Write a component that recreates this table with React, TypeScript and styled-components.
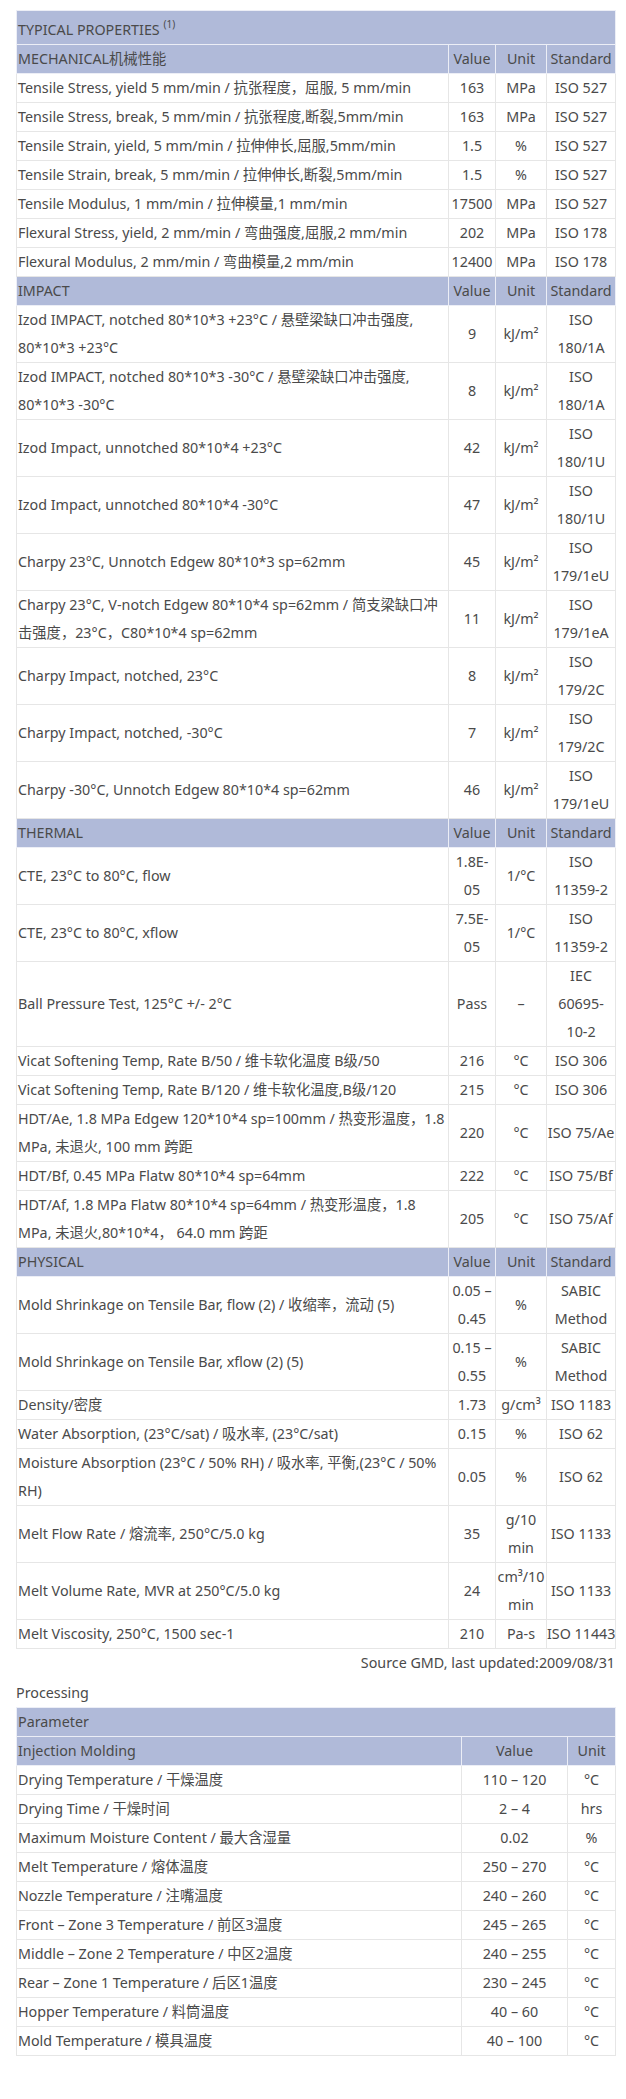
import styled, { createGlobalStyle } from "styled-components";

const GlobalStyle = createGlobalStyle`
  body {
    margin: 0;
    background: #ffffff;
    color: #4a4a4a;
    font-family: "Noto Sans", "Noto Sans CJK SC", sans-serif;
    font-size: 14.3px;
  }
`;

type Row = [string, string, string, string?];

interface Section {
  title: string;
  rows: Row[];
}

// \u00a0 keeps the short standards on one line, as on the data sheet
const sections: Section[] = [
  {
    title: "MECHANICAL机械性能",
    rows: [
      ["Tensile Stress, yield 5 mm/min / 抗张程度，屈服, 5 mm/min", "163", "MPa", "ISO 527"],
      ["Tensile Stress, break, 5 mm/min / 抗张程度,断裂,5mm/min", "163", "MPa", "ISO 527"],
      ["Tensile Strain, yield, 5 mm/min / 拉伸伸长,屈服,5mm/min", "1.5", "%", "ISO 527"],
      ["Tensile Strain, break, 5 mm/min / 拉伸伸长,断裂,5mm/min", "1.5", "%", "ISO 527"],
      ["Tensile Modulus, 1 mm/min / 拉伸模量,1 mm/min", "17500", "MPa", "ISO 527"],
      ["Flexural Stress, yield, 2 mm/min / 弯曲强度,屈服,2 mm/min", "202", "MPa", "ISO 178"],
      ["Flexural Modulus, 2 mm/min / 弯曲模量,2 mm/min", "12400", "MPa", "ISO 178"],
    ],
  },
  {
    title: "IMPACT",
    rows: [
      ["Izod IMPACT, notched 80*10*3 +23°C / 悬壁梁缺口冲击强度, 80*10*3 +23°C", "9", "kJ/m²", "ISO 180/1A"],
      ["Izod IMPACT, notched 80*10*3 -30°C / 悬壁梁缺口冲击强度, 80*10*3 -30°C", "8", "kJ/m²", "ISO 180/1A"],
      ["Izod Impact, unnotched 80*10*4 +23°C", "42", "kJ/m²", "ISO 180/1U"],
      ["Izod Impact, unnotched 80*10*4 -30°C", "47", "kJ/m²", "ISO 180/1U"],
      ["Charpy 23°C, Unnotch Edgew 80*10*3 sp=62mm", "45", "kJ/m²", "ISO 179/1eU"],
      ["Charpy 23°C, V-notch Edgew 80*10*4 sp=62mm / 简支梁缺口冲击强度，23°C，C80*10*4 sp=62mm", "11", "kJ/m²", "ISO 179/1eA"],
      ["Charpy Impact, notched, 23°C", "8", "kJ/m²", "ISO 179/2C"],
      ["Charpy Impact, notched, -30°C", "7", "kJ/m²", "ISO 179/2C"],
      ["Charpy -30°C, Unnotch Edgew 80*10*4 sp=62mm", "46", "kJ/m²", "ISO 179/1eU"],
    ],
  },
  {
    title: "THERMAL",
    rows: [
      ["CTE, 23°C to 80°C, flow", "1.8E-05", "1/°C", "ISO 11359-2"],
      ["CTE, 23°C to 80°C, xflow", "7.5E-05", "1/°C", "ISO 11359-2"],
      ["Ball Pressure Test, 125°C +/- 2°C", "Pass", "–", "IEC 60695-10\u20112"],
      ["Vicat Softening Temp, Rate B/50 / 维卡软化温度 B级/50", "216", "°C", "ISO\u00a0306"],
      ["Vicat Softening Temp, Rate B/120 / 维卡软化温度,B级/120", "215", "°C", "ISO\u00a0306"],
      ["HDT/Ae, 1.8 MPa Edgew 120*10*4 sp=100mm / 热变形温度，1.8 MPa, 未退火, 100 mm 跨距", "220", "°C", "ISO\u00a075/Ae"],
      ["HDT/Bf, 0.45 MPa Flatw 80*10*4 sp=64mm", "222", "°C", "ISO\u00a075/Bf"],
      ["HDT/Af, 1.8 MPa Flatw 80*10*4 sp=64mm / 热变形温度，1.8 MPa, 未退火,80*10*4，  64.0 mm 跨距", "205", "°C", "ISO\u00a075/Af"],
    ],
  },
  {
    title: "PHYSICAL",
    rows: [
      ["Mold Shrinkage on Tensile Bar, flow (2) / 收缩率，流动 (5)", "0.05 – 0.45", "%", "SABIC Method"],
      ["Mold Shrinkage on Tensile Bar, xflow (2) (5)", "0.15 – 0.55", "%", "SABIC Method"],
      ["Density/密度", "1.73", "g/cm³", "ISO\u00a01183"],
      ["Water Absorption, (23°C/sat) / 吸水率, (23°C/sat)", "0.15", "%", "ISO 62"],
      ["Moisture Absorption (23°C / 50% RH) / 吸水率, 平衡,(23°C / 50% RH)", "0.05", "%", "ISO 62"],
      ["Melt Flow Rate / 熔流率, 250°C/5.0 kg", "35", "g/10 min", "ISO\u00a01133"],
      ["Melt Volume Rate, MVR at 250°C/5.0 kg", "24", "cm³/10 min", "ISO\u00a01133"],
      ["Melt Viscosity, 250°C, 1500 sec-1", "210", "Pa-s", "ISO\u00a011443"],
    ],
  },
];

const processing: Row[] = [
  ["Drying Temperature / 干燥温度", "110 – 120", "°C"],
  ["Drying Time / 干燥时间", "2 – 4", "hrs"],
  ["Maximum Moisture Content / 最大含湿量", "0.02", "%"],
  ["Melt Temperature / 熔体温度", "250 – 270", "°C"],
  ["Nozzle Temperature / 注嘴温度", "240 – 260", "°C"],
  ["Front – Zone 3 Temperature / 前区3温度", "245 – 265", "°C"],
  ["Middle – Zone 2 Temperature / 中区2温度", "240 – 255", "°C"],
  ["Rear – Zone 1 Temperature / 后区1温度", "230 – 245", "°C"],
  ["Hopper Temperature / 料筒温度", "40 – 60", "°C"],
  ["Mold Temperature / 模具温度", "40 – 100", "°C"],
];

const Page = styled.div`
  width: 599px;
  padding: 10px 0 0 16px;
`;

const DataTable = styled.table`
  width: 599px;
  table-layout: fixed;
  border-collapse: collapse;
  border: 1px solid #333333;
`;

const HeadRow = styled.tr`
  background-color: #b0bad9;
`;

const Cell = styled.td<{ $center?: boolean }>`
  padding: ${(p) => (p.$center ? "0" : "0 0 0 1px")};
  line-height: 28px;
  vertical-align: middle;
  text-align: ${(p) => (p.$center ? "center" : "left")};
  border: 1px solid #e6e6e6;

  ${HeadRow} & {
    border-color: #eceef6;
  }
`;

const TitleCell = styled(Cell)`
  padding-top: 5px;
`;

const Sup = styled.sup`
  font-size: 10px;
  line-height: 0;
  vertical-align: 7px;
`;

const Source = styled.div`
  text-align: right;
  line-height: 28px;
`;

const Caption = styled.div`
  margin-top: 2px;
  line-height: 28px;
`;

export default function App() {
  return (
    <Page>
      <GlobalStyle />
      <DataTable>
        <colgroup>
          <col style={{ width: 432 }} />
          <col style={{ width: 47 }} />
          <col style={{ width: 51 }} />
          <col style={{ width: 69 }} />
        </colgroup>
        <tbody>
          <HeadRow>
            <TitleCell colSpan={4}>
              TYPICAL PROPERTIES <Sup>(1)</Sup>
            </TitleCell>
          </HeadRow>
          {sections.map((s) => [
            <HeadRow key={s.title}>
              <Cell>{s.title}</Cell>
              <Cell $center>Value</Cell>
              <Cell $center>Unit</Cell>
              <Cell $center>Standard</Cell>
            </HeadRow>,
            ...s.rows.map((r, i) => (
              <tr key={s.title + i}>
                <Cell>{r[0]}</Cell>
                <Cell $center>{r[1]}</Cell>
                <Cell $center>{r[2]}</Cell>
                <Cell $center>{r[3]}</Cell>
              </tr>
            )),
          ])}
        </tbody>
      </DataTable>
      <Source>Source GMD, last updated:2009/08/31</Source>
      <Caption>Processing</Caption>
      <DataTable>
        <colgroup>
          <col style={{ width: 445 }} />
          <col style={{ width: 106 }} />
          <col style={{ width: 48 }} />
        </colgroup>
        <tbody>
          <HeadRow>
            <Cell colSpan={3}>Parameter</Cell>
          </HeadRow>
          <HeadRow>
            <Cell>Injection Molding</Cell>
            <Cell $center>Value</Cell>
            <Cell $center>Unit</Cell>
          </HeadRow>
          {processing.map((r, i) => (
            <tr key={i}>
              <Cell>{r[0]}</Cell>
              <Cell $center>{r[1]}</Cell>
              <Cell $center>{r[2]}</Cell>
            </tr>
          ))}
        </tbody>
      </DataTable>
    </Page>
  );
}
